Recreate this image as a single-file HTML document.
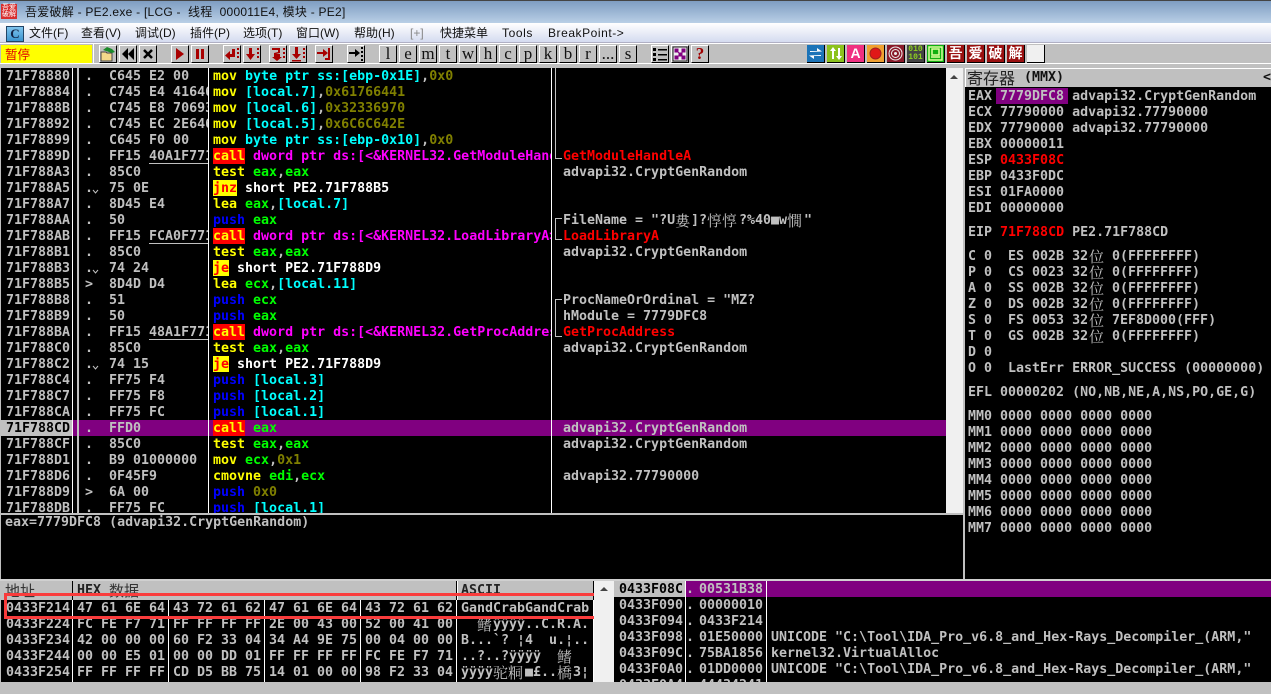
<!DOCTYPE html>
<html><head><meta charset="utf-8"><style>
html,body{margin:0;padding:0;width:1271px;height:682px;overflow:hidden;background:#c0c0c0}
div,pre,svg{position:absolute;margin:0}
pre{font:bold 13.3px/16px "DejaVu Sans Mono","Noto Sans CJK SC",monospace;letter-spacing:0;color:#c0c0c0;white-space:pre;padding-top:1px}
i{font-style:normal}
.y{color:#ff0}.c{color:#0ff}.o{color:#808000}.g{color:#0f0}.b{color:#00f}.p{color:#f0f}.w{color:#fff}.r{color:#f00}.n{color:#c0c0c0}.k{color:#000}
.z{font:15px/16px "Noto Serif CJK SC","WenQuanYi Zen Hei",serif;letter-spacing:0;color:#c0c0c0;margin-top:1px}
.mn{font:12px/16px "Liberation Sans","Noto Sans CJK SC",sans-serif;color:#111;top:25px;white-space:pre}
.t{top:45px;width:16px;height:16px;background:#c0c0c0;border-top:1px solid #fff;border-left:1px solid #fff;border-right:1px solid #000;border-bottom:1px solid #000;text-align:center;font:17px/15px "Liberation Serif",serif;color:#111;overflow:hidden}
.ci{top:45px;width:17px;height:17px;border-right:1px solid #000;border-bottom:1px solid #000;overflow:hidden;text-align:center}
.h{font:bold 14px/17px "Noto Sans CJK SC",sans-serif;color:#fff;background:#9a1010;letter-spacing:0}
.v{background:#fff;width:1px}
</style></head><body>
<!-- title bar -->
<div style="left:0;top:0;width:1271px;height:23px;background:linear-gradient(#7c9bc0,#b9cfe6)"></div>
<div style="left:0;top:0;width:1271px;height:1px;background:#444"></div>
<div style="left:1px;top:4px;width:16px;height:15px;background:#d83030;color:#fff;font:7px/7px 'Noto Sans CJK SC',sans-serif;text-align:center">吾爱<br>破解</div>
<div style="left:25px;top:4px;font:12px/17px 'Liberation Sans','Noto Sans CJK SC',sans-serif;letter-spacing:.25px;color:#111;white-space:pre">吾爱破解 - PE2.exe - [LCG -  线程  000011E4, 模块 - PE2]</div>
<!-- menu -->
<div style="left:0;top:23px;width:1271px;height:20px;background:linear-gradient(#fff,#d2d9ef)"></div>
<div style="left:0;top:42px;width:1271px;height:1px;background:#b0b0c4"></div>
<div style="left:0;top:43px;width:1271px;height:1px;background:#fff"></div>
<div style="left:6px;top:26px;width:16px;height:14px;background:linear-gradient(#7fc4ee,#3b93cf);border:1px solid #246;font:bold 13px/14px 'Liberation Serif',serif;color:#124;text-align:center">C</div>
<div class="mn" style="left:29px">文件(F)</div>
<div class="mn" style="left:81px">查看(V)</div>
<div class="mn" style="left:135px">调试(D)</div>
<div class="mn" style="left:190px">插件(P)</div>
<div class="mn" style="left:243px">选项(T)</div>
<div class="mn" style="left:296px">窗口(W)</div>
<div class="mn" style="left:354px">帮助(H)</div>
<div class="mn" style="left:410px;color:#888">[+]</div>
<div class="mn" style="left:440px">快捷菜单</div>
<div class="mn" style="left:502px;letter-spacing:.6px">Tools</div>
<div class="mn" style="left:548px;letter-spacing:.55px">BreakPoint-&gt;</div>
<!-- toolbar -->
<div style="left:1px;top:45px;width:91px;height:18px;background:#ff0;color:#e00000;font:12.500px/18px 'Noto Sans CJK SC',sans-serif;text-indent:4px">暂停</div>
<div style="left:0;top:63px;width:1271px;height:1px;background:#fff"></div>
<div style="left:93px;top:44px;width:1px;height:19px;background:#fff"></div>
<div class="t" style="left:99px"><svg style="left:0;top:0" width="16" height="16"><path d="M1 6h5l1 1h5v8H1z" fill="#f4d98a" stroke="#444"/><path d="M3 4l4-3 5 2 3 3-3 1z" fill="#1a8a2a"/></svg></div>
<div class="t" style="left:119px"><svg style="left:0;top:0" width="16" height="16"><path d="M8 2v12L2 8zM14 2v12L8 8z" fill="#000"/></svg></div>
<div class="t" style="left:139px"><svg style="left:0;top:0" width="16" height="16"><path d="M4 4l8 8M12 4l-8 8" stroke="#000" stroke-width="2.500"/></svg></div>
<div class="t" style="left:171px"><svg style="left:0;top:0" width="16" height="16"><path d="M4 2v12l8-6z" fill="#a80000"/></svg></div>
<div class="t" style="left:191px"><svg style="left:0;top:0" width="16" height="16"><path d="M4 3h3v10H4zM9 3h3v10H9z" fill="#a80000"/></svg></div>
<div class="t" style="left:223px"><svg style="left:0;top:0" width="16" height="16"><path d="M2 3h3v5h2V5l5 4.500-5 4.500v-3H2z" fill="#a80000" transform="matrix(-1 0 0 1 13 0)"/><path d="M13 2h2v2h-2zM13 6h2v2h-2zM13 10h2v2h-2z" fill="#a80000"/></svg></div>
<div class="t" style="left:243px"><svg style="left:0;top:0" width="16" height="16"><path d="M5 2h3v6h3l-4.500 6L2 8h3z" fill="#a80000"/><path d="M13 2h2v2h-2zM13 6h2v2h-2zM13 10h2v2h-2z" fill="#a80000"/></svg></div>
<div class="t" style="left:269px"><svg style="left:0;top:0" width="16" height="16"><path d="M2 2h8v5L6 8h4v3h2l-5 4-5-4h2V7l4-1V4H2z" fill="#a80000"/><path d="M13 2h2v2h-2zM13 6h2v2h-2zM13 10h2v2h-2z" fill="#a80000"/></svg></div>
<div class="t" style="left:289px"><svg style="left:0;top:0" width="16" height="16"><path d="M5 1h3v7h3l-4.500 5L2 8h3zM2 14h9v1.500H2z" fill="#a80000"/><path d="M13 2h2v2h-2zM13 6h2v2h-2zM13 10h2v2h-2z" fill="#a80000"/></svg></div>
<div class="t" style="left:315px"><svg style="left:0;top:0" width="16" height="16"><path d="M1 6h6V3l5 4-5 4V8H1zM12 2h2v12H9v-2h3z" fill="#a80000"/></svg></div>
<div class="t" style="left:347px"><svg style="left:0;top:0" width="16" height="16"><path d="M1 6h6V3l5 4-5 4V8H1z" fill="#000"/><path d="M13 1h2v2h-2zM13 5h2v2h-2zM13 9h2v2h-2zM13 13h2v2h-2z" fill="#000"/></svg></div>
<div class="t" style="left:379px">l</div>
<div class="t" style="left:399px">e</div>
<div class="t" style="left:419px">m</div>
<div class="t" style="left:439px">t</div>
<div class="t" style="left:459px">w</div>
<div class="t" style="left:479px">h</div>
<div class="t" style="left:499px">c</div>
<div class="t" style="left:519px">p</div>
<div class="t" style="left:539px">k</div>
<div class="t" style="left:559px">b</div>
<div class="t" style="left:579px">r</div>
<div class="t" style="left:599px">...</div>
<div class="t" style="left:619px">s</div>
<div class="t" style="left:651px"><svg style="left:0;top:0" width="16" height="16"><path d="M1 2h3v3H1zM1 7h3v3H1zM1 12h3v3H1zM6 3h9v1.500H6zM6 8h9v1.500H6zM6 13h9v1.500H6z" fill="#000"/></svg></div>
<div class="t" style="left:671px"><svg style="left:0;top:0" width="16" height="16"><rect x="1" y="1" width="14" height="14" fill="#eee" stroke="#222"/><path d="M3 3h3v3H3zM10 3h3v3h-3zM7 7h3v3H7zM3 10h3v3H3zM10 10h3v3h-3zM5 5l4 4M11 5L8 9" fill="#800080" stroke="#800080"/></svg></div>
<div class="t" style="left:691px;font:bold 17px/16px 'Liberation Serif',serif;color:#a00000">?</div>
<div class="ci" style="left:807px;background:#1c74b8"><svg style="left:0;top:0" width="17" height="17"><path d="M3 6h7V3l5 3.500L3 7zM14 11H7v3l-5-3.500L14 10z" fill="#fff"/></svg></div>
<div class="ci" style="left:827px;background:#8cc21c"><svg style="left:0;top:0" width="17" height="17"><path d="M5 14V6H3l3-4 3 4H7v8zM11 3v8H9l3 4 3-4h-2V3z" fill="#fff"/></svg></div>
<div class="ci" style="left:847px;background:#f03080;color:#fff;font:bold 14px/17px 'Liberation Sans',sans-serif">A</div>
<div class="ci" style="left:867px;background:#f0a030"><svg style="left:0;top:0" width="17" height="17"><circle cx="8.500" cy="8.500" r="5.500" fill="#e01818" stroke="#a02020"/></svg></div>
<div class="ci" style="left:887px;background:#8a1a2a"><svg style="left:0;top:0" width="17" height="17"><circle cx="8.500" cy="8.500" r="6.500" fill="none" stroke="#eee"/><circle cx="8.500" cy="8.500" r="4" fill="none" stroke="#eee"/><circle cx="8.500" cy="8.500" r="1.500" fill="#eee"/></svg></div>
<div class="ci" style="left:907px;background:#444;color:#8ed020;font:bold 8px/8px 'Liberation Mono',monospace"><span style="position:relative;top:1px">010<br>101</span></div>
<div class="ci" style="left:927px;background:#10b010"><svg style="left:0;top:0" width="17" height="17"><path d="M2 2h13v13H2zM5 4h7v6H5zM4 12h9" fill="none" stroke="#dfffa0" stroke-width="1.500"/></svg></div>
<div class="ci h" style="left:947px">吾</div>
<div class="ci h" style="left:967px">爱</div>
<div class="ci h" style="left:987px">破</div>
<div class="ci h" style="left:1007px">解</div>
<div class="ci" style="left:1027px;background:#f0f0f0;width:17px"></div>

<!-- disasm panel -->
<div style="left:1px;top:68px;width:945px;height:445px;background:#000"></div>
<div style="left:0;top:420px;width:72px;height:16px;background:#c0c0c0"></div>
<div style="left:72px;top:420px;width:874px;height:16px;background:#800080"></div>
<div class="v" style="left:72px;top:68px;height:445px"></div>
<div style="left:77px;top:68px;width:2px;height:445px;background:#c0c0c0"></div>
<div class="v" style="left:208px;top:68px;height:445px"></div>
<div class="v" style="left:551px;top:68px;height:445px"></div>
<pre style="left:6px;top:68px">71F78880
71F78884
71F7888B
71F78892
71F78899
71F7889D
71F788A3
71F788A5
71F788A7
71F788AA
71F788AB
71F788B1
71F788B3
71F788B5
71F788B8
71F788B9
71F788BA
71F788C0
71F788C2
71F788C4
71F788C7
71F788CA
<i class="k">71F788CD</i>
71F788CF
71F788D1
71F788D6
71F788D9
71F788DB</pre>
<div style="left:85px;top:68px;width:123px;height:445px;overflow:hidden"><pre style="left:0;top:0">.  C645 E2 00
.  C745 E4 41646176
.  C745 E8 70693332
.  C745 EC 2E646C6C
.  C645 F0 00
.  FF15 40A1F771
.  85C0
.  75 0E
.  8D45 E4
.  50
.  FF15 FCA0F771
.  85C0
.  74 24
&gt;  8D4D D4
.  51
.  50
.  FF15 48A1F771
.  85C0
.  74 15
.  FF75 F4
.  FF75 F8
.  FF75 FC
.  FFD0
.  85C0
.  B9 01000000
.  0F45F9
&gt;  6A 00
.  FF75 FC</pre></div>
<svg style="left:92px;top:188px" width="8" height="8"><path d="M1 2l2.500 3L6 2" fill="none" stroke="#c0c0c0"/></svg>
<svg style="left:92px;top:268px" width="8" height="8"><path d="M1 2l2.500 3L6 2" fill="none" stroke="#c0c0c0"/></svg>
<svg style="left:92px;top:364px" width="8" height="8"><path d="M1 2l2.500 3L6 2" fill="none" stroke="#c0c0c0"/></svg>
<div style="left:149px;top:163px;width:59px;height:1px;background:#c0c0c0"></div>
<div style="left:149px;top:243px;width:59px;height:1px;background:#c0c0c0"></div>
<div style="left:149px;top:339px;width:59px;height:1px;background:#c0c0c0"></div>
<!-- tag backgrounds -->
<div style="left:213px;top:148px;width:32px;height:16px;background:#f00"></div>
<div style="left:213px;top:180px;width:24px;height:16px;background:#ff0"></div>
<div style="left:213px;top:228px;width:32px;height:16px;background:#f00"></div>
<div style="left:213px;top:260px;width:16px;height:16px;background:#ff0"></div>
<div style="left:213px;top:324px;width:32px;height:16px;background:#f00"></div>
<div style="left:213px;top:356px;width:16px;height:16px;background:#ff0"></div>
<div style="left:213px;top:420px;width:32px;height:16px;background:#f00"></div>
<div style="left:213px;top:68px;width:338px;height:445px;overflow:hidden"><pre style="left:0;top:0"><i class="y">mov</i> <i class="c">byte ptr ss:[ebp-0x1E]</i>,<i class="o">0x0</i>
<i class="y">mov</i> <i class="c">[local.7]</i>,<i class="o">0x61766441</i>
<i class="y">mov</i> <i class="c">[local.6]</i>,<i class="o">0x32336970</i>
<i class="y">mov</i> <i class="c">[local.5]</i>,<i class="o">0x6C6C642E</i>
<i class="y">mov</i> <i class="c">byte ptr ss:[ebp-0x10]</i>,<i class="o">0x0</i>
<i class="y">call</i> <i class="p">dword ptr ds:[&lt;&amp;KERNEL32.GetModuleHandleA&gt;]</i>
<i class="y">test</i> <i class="g">eax</i>,<i class="g">eax</i>
<i class="r">jnz</i> <i class="w">short PE2.71F788B5</i>
<i class="y">lea</i> <i class="g">eax</i>,<i class="c">[local.7]</i>
<i class="b">push</i> <i class="g">eax</i>
<i class="y">call</i> <i class="p">dword ptr ds:[&lt;&amp;KERNEL32.LoadLibraryA&gt;]</i>
<i class="y">test</i> <i class="g">eax</i>,<i class="g">eax</i>
<i class="r">je</i> <i class="w">short PE2.71F788D9</i>
<i class="y">lea</i> <i class="g">ecx</i>,<i class="c">[local.11]</i>
<i class="b">push</i> <i class="g">ecx</i>
<i class="b">push</i> <i class="g">eax</i>
<i class="y">call</i> <i class="p">dword ptr ds:[&lt;&amp;KERNEL32.GetProcAddress&gt;]</i>
<i class="y">test</i> <i class="g">eax</i>,<i class="g">eax</i>
<i class="r">je</i> <i class="w">short PE2.71F788D9</i>
<i class="b">push</i> <i class="c">[local.3]</i>
<i class="b">push</i> <i class="c">[local.2]</i>
<i class="b">push</i> <i class="c">[local.1]</i>
<i class="y">call</i> <i class="g">eax</i>
<i class="y">test</i> <i class="g">eax</i>,<i class="g">eax</i>
<i class="y">mov</i> <i class="g">ecx</i>,<i class="o">0x1</i>
<i class="y">cmovne</i> <i class="g">edi</i>,<i class="g">ecx</i>
<i class="b">push</i> <i class="o">0x0</i>
<i class="b">push</i> <i class="c">[local.1]</i></pre></div>
<!-- brackets -->
<div style="left:555px;top:68px;width:6px;height:90px;border-left:1px solid #c0c0c0;border-bottom:1px solid #c0c0c0"></div>
<div style="left:555px;top:218px;width:6px;height:20px;border:1px solid #c0c0c0;border-right:0"></div>
<div style="left:555px;top:299px;width:6px;height:36px;border:1px solid #c0c0c0;border-right:0"></div>
<pre style="left:563px;top:148px;color:#f00">GetModuleHandleA</pre>
<pre style="left:563px;top:164px">advapi32.CryptGenRandom</pre>
<pre style="left:563px;top:212px">FileName = "?U</pre>
<div class="z" style="left:675px;top:212px">婁</div>
<pre style="left:691px;top:212px">]?</pre>
<div class="z" style="left:707px;top:212px;white-space:pre">惇惇</div>
<pre style="left:739px;top:212px">?%40■w</pre>
<div class="z" style="left:787px;top:212px">憪</div>
<pre style="left:804px;top:212px">"</pre>
<pre style="left:563px;top:228px;color:#f00">LoadLibraryA</pre>
<pre style="left:563px;top:244px">advapi32.CryptGenRandom</pre>
<pre style="left:563px;top:292px">ProcNameOrOrdinal = "MZ?</pre>
<pre style="left:563px;top:308px">hModule = 7779DFC8</pre>
<pre style="left:563px;top:324px;color:#f00">GetProcAddress</pre>
<pre style="left:563px;top:340px">advapi32.CryptGenRandom</pre>
<pre style="left:563px;top:420px">advapi32.CryptGenRandom</pre>
<pre style="left:563px;top:436px">advapi32.CryptGenRandom</pre>
<pre style="left:563px;top:468px">advapi32.77790000</pre>
<!-- disasm scrollbar -->
<div style="left:946px;top:68px;width:17px;height:445px;background:#f0f0f0"></div>
<svg style="left:947px;top:72px" width="14" height="10"><path d="M3 7h8L7 3z" fill="#444"/></svg>
<!-- info -->
<div style="left:1px;top:515px;width:962px;height:64px;background:#000"></div>
<pre style="left:5px;top:514px">eax=7779DFC8 (advapi32.CryptGenRandom)</pre>
<!-- registers -->
<div style="left:965px;top:68px;width:306px;height:1px;background:#fff"></div>
<div style="left:965px;top:68px;width:1px;height:19px;background:#fff"></div>
<div style="left:967px;top:68px;font:16px/19px 'Noto Sans CJK SC',sans-serif;color:#222;white-space:pre">寄存器</div>
<pre style="left:1024px;top:69px;color:#111">(MMX)</pre>
<pre style="left:1263px;top:69px;color:#111">&lt;</pre>
<div style="left:965px;top:87px;width:306px;height:492px;background:#000"></div>
<div style="left:996px;top:88px;width:72px;height:16px;background:#800080"></div>
<pre style="left:968px;top:88px">EAX 7779DFC8 advapi32.CryptGenRandom
ECX 77790000 advapi32.77790000
EDX 77790000 advapi32.77790000
EBX 00000011
ESP <i class="r">0433F08C</i>
EBP 0433F0DC
ESI 01FA0000
EDI 00000000</pre>
<pre style="left:968px;top:224px">EIP <i class="r">71F788CD</i> PE2.71F788CD</pre>
<pre style="left:968px;top:248px">C 0  ES 002B 32
P 0  CS 0023 32
A 0  SS 002B 32
Z 0  DS 002B 32
S 0  FS 0053 32
T 0  GS 002B 32
D 0
O 0  LastErr ERROR_SUCCESS (00000000)</pre>
<pre style="left:968px;top:384px">EFL 00000202 (NO,NB,NE,A,NS,PO,GE,G)</pre>
<pre style="left:968px;top:408px">MM0 0000 0000 0000 0000
MM1 0000 0000 0000 0000
MM2 0000 0000 0000 0000
MM3 0000 0000 0000 0000
MM4 0000 0000 0000 0000
MM5 0000 0000 0000 0000
MM6 0000 0000 0000 0000
MM7 0000 0000 0000 0000</pre>
<pre style="left:1112px;top:248px">0(FFFFFFFF)
0(FFFFFFFF)
0(FFFFFFFF)
0(FFFFFFFF)
7EF8D000(FFF)
0(FFFFFFFF)</pre>
<div class="z" style="left:1089px;top:248px">位</div>
<div class="z" style="left:1089px;top:264px">位</div>
<div class="z" style="left:1089px;top:280px">位</div>
<div class="z" style="left:1089px;top:296px">位</div>
<div class="z" style="left:1089px;top:312px">位</div>
<div class="z" style="left:1089px;top:328px">位</div>
<!-- dump -->
<div style="left:0;top:579px;width:1271px;height:2px;background:#d0d0d0"></div>
<div style="left:1px;top:581px;width:593px;height:19px;background:#c0c0c0"></div>
<div style="left:72px;top:581px;width:1px;height:19px;background:#000"></div>
<div style="left:456px;top:581px;width:1px;height:19px;background:#000"></div>
<div style="left:457px;top:581px;width:1px;height:19px;background:#fff"></div>
<div style="left:593px;top:581px;width:1px;height:19px;background:#000"></div>
<div style="left:5px;top:581px;font:15px/19px 'Noto Sans CJK SC',sans-serif;color:#333">地址</div>
<pre style="left:77px;top:582px;color:#222">HEX</pre>
<div style="left:109px;top:581px;font:15px/19px 'Noto Sans CJK SC',sans-serif;color:#333">数据</div>
<pre style="left:461px;top:582px;color:#222">ASCII</pre>
<div style="left:1px;top:600px;width:593px;height:82px;background:#000"></div>
<div class="v" style="left:72px;top:600px;height:82px"></div>
<div class="v" style="left:168px;top:600px;height:82px"></div>
<div class="v" style="left:264px;top:600px;height:82px"></div>
<div class="v" style="left:360px;top:600px;height:82px"></div>
<div class="v" style="left:456px;top:600px;height:82px"></div>
<div class="v" style="left:593px;top:600px;height:82px"></div>
<pre style="left:6px;top:600px">0433F214
0433F224
0433F234
0433F244
0433F254</pre>
<pre style="left:77px;top:600px">47 61 6E 64
FC FE F7 71
42 00 00 00
00 00 E5 01
FF FF FF FF</pre>
<pre style="left:173px;top:600px">43 72 61 62
FF FF FF FF
60 F2 33 04
00 00 DD 01
CD D5 BB 75</pre>
<pre style="left:269px;top:600px">47 61 6E 64
2E 00 43 00
34 A4 9E 75
FF FF FF FF
14 01 00 00</pre>
<pre style="left:365px;top:600px">43 72 61 62
52 00 41 00
00 04 00 00
FC FE F7 71
98 F2 33 04</pre>
<pre style="left:461px;top:600px">GandCrabGandCrab</pre>
<div class="z" style="left:477px;top:616px">鳍</div>
<pre style="left:493px;top:616px">ÿÿÿÿ..C.R.A.</pre>
<pre style="left:461px;top:632px">B...`? ¦4  u.¦..</pre>
<pre style="left:461px;top:648px">..?..?ÿÿÿÿ</pre>
<div class="z" style="left:557px;top:648px">鳍</div>
<pre style="left:461px;top:664px">ÿÿÿÿ</pre>
<div class="z" style="left:493px;top:664px;white-space:pre">驼粡</div>
<pre style="left:525px;top:664px">■£..</pre>
<div class="z" style="left:557px;top:664px">橋</div>
<pre style="left:573px;top:664px">3¦</pre>
<!-- red highlight -->
<div style="left:4px;top:593px;width:587px;height:20px;border:3px solid #f93c3c"></div>
<!-- dump scrollbar -->
<div style="left:594px;top:581px;width:20px;height:101px;background:#f0f0f0"></div>
<svg style="left:597px;top:584px" width="14" height="10"><path d="M3 7h8L7 3z" fill="#444"/></svg>
<!-- stack -->
<div style="left:614px;top:581px;width:657px;height:101px;background:#000"></div>
<div style="left:614px;top:581px;width:71px;height:16px;background:#c0c0c0"></div>
<div style="left:685px;top:581px;width:586px;height:16px;background:#800080"></div>
<div class="v" style="left:685px;top:581px;height:101px"></div>
<div class="v" style="left:766px;top:581px;height:101px"></div>
<pre style="left:619px;top:581px"><i class="k">0433F08C</i>
0433F090
0433F094
0433F098
0433F09C
0433F0A0
0433F0A4</pre>
<pre style="left:686px;top:581px">.
.
.
.
.
.
.</pre>
<pre style="left:699px;top:581px">00531B38
00000010
0433F214
01E50000
75BA1856
01DD0000
44434241</pre>
<pre style="left:771px;top:629px">UNICODE "C:\Tool\IDA_Pro_v6.8_and_Hex-Rays_Decompiler_(ARM,"
kernel32.VirtualAlloc
UNICODE "C:\Tool\IDA_Pro_v6.8_and_Hex-Rays_Decompiler_(ARM,"</pre>
</body></html>
